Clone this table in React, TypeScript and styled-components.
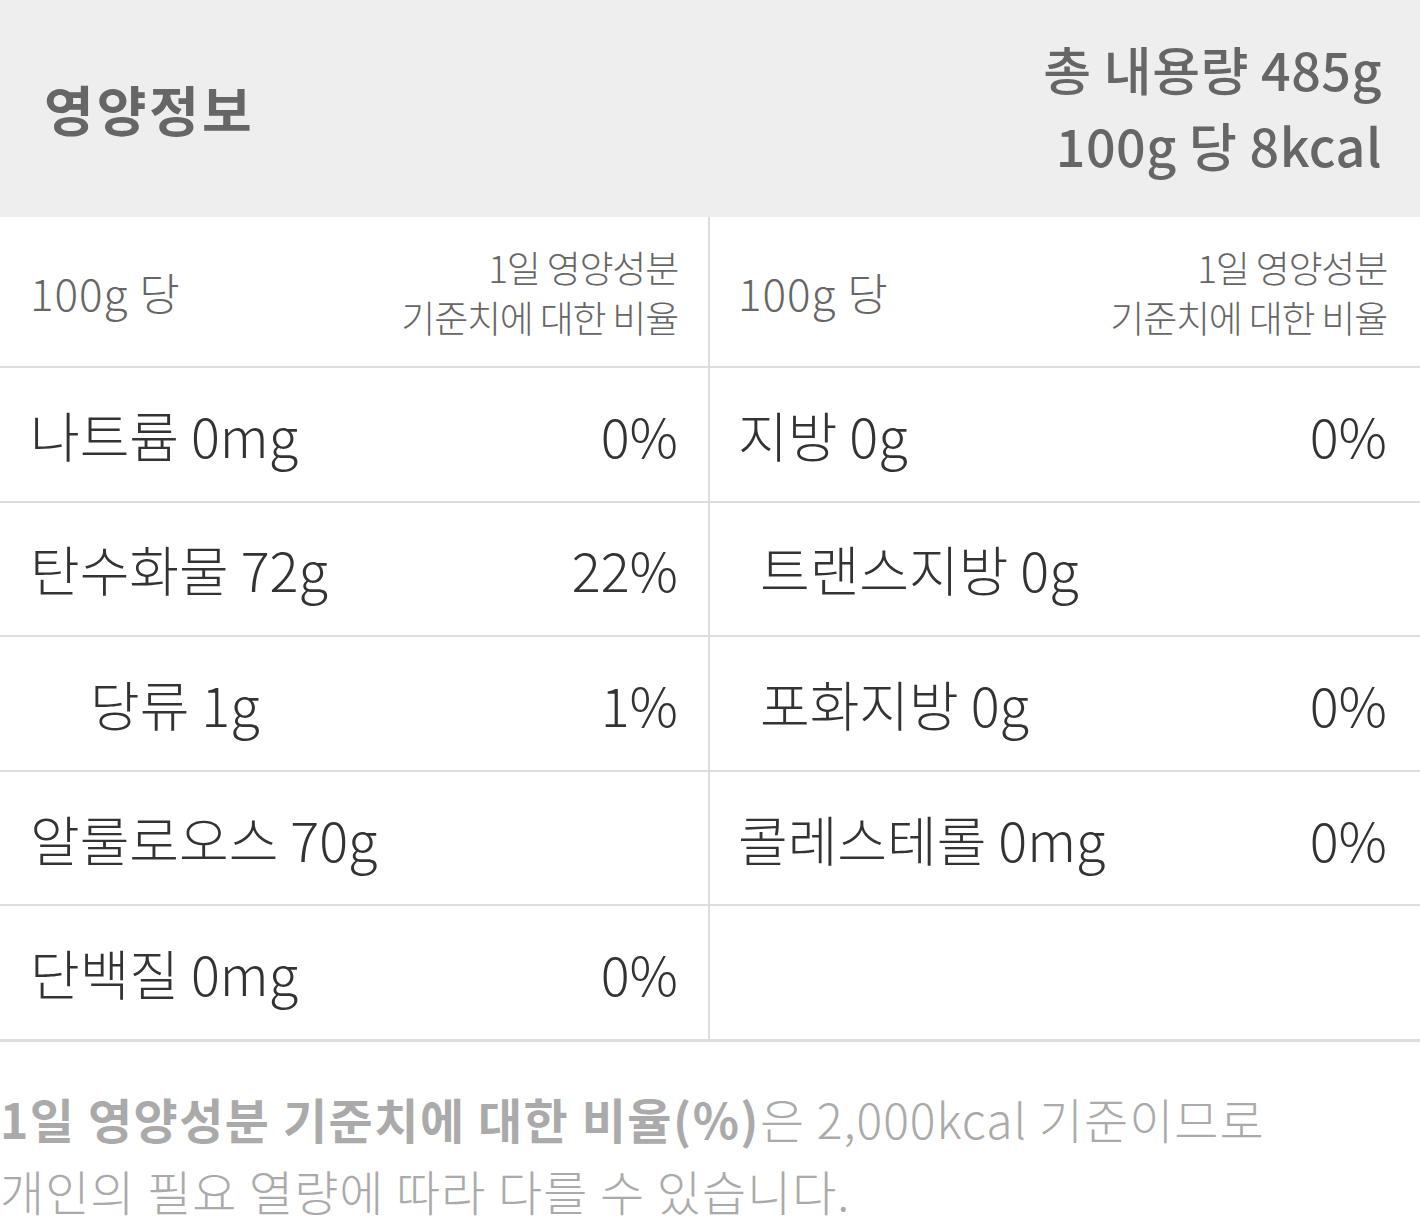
import styled, { createGlobalStyle } from 'styled-components';

const GlobalStyle = createGlobalStyle`
    html, body {
        margin: 0;
        padding: 0;
        background: #fff;
    }

    body {
        font-family: "Noto Sans CJK KR", "Noto Sans", sans-serif;
    }
`;

const Page = styled.div`
    width: 1420px;
    overflow: hidden;
`;

const Header = styled.header`
    height: 217px;
    box-sizing: border-box;
    background-color: #eeeeee;
    display: flex;
    justify-content: space-between;
    align-items: center;
    padding: 0 38px 0 44px;
    color: #666;
`;

const Title = styled.h1`
    margin: 0;
    font-size: 54px;
    font-weight: 700;
    letter-spacing: 3px;
`;

const Summary = styled.div`
    text-align: right;
    font-size: 52px;
    font-weight: 500;
    line-height: 76px;
    letter-spacing: 0.5px;
    margin-top: -4px;
`;

const Table = styled.div`
    display: grid;
    grid-template-columns: 710px 1fr;
`;

const Cell = styled.div<{ $head?: boolean; $left?: boolean; $indent?: number }>`
    box-sizing: border-box;
    height: ${(p) => (p.$head ? '151px' : '134.6px')};
    border-bottom: 2px solid #dddddd;
    border-right: ${(p) => (p.$left ? '2px solid #dddddd' : 'none')};
    display: flex;
    justify-content: space-between;
    align-items: center;
    padding: 0 ${(p) => (p.$left ? '30px' : '33px')} 0 ${(p) => (p.$left ? 30 : 28) + (p.$indent ?? 0)}px;
    color: #333;
    font-weight: 300;
    font-size: 54px;
`;

const HeadLabel = styled.span`
    color: #666;
    font-size: 44px;
    letter-spacing: 1px;
`;

const HeadNote = styled.span`
    color: #666;
    font-size: 37px;
    line-height: 50px;
    text-align: right;
    letter-spacing: -1.2px;
`;

const Amount = styled.span``;

const Percent = styled.span``;

const Footer = styled.footer`
    border-top: 1px solid #dddddd;
    padding-top: 40px;
    color: #aaa;
    font-size: 48px;
    font-weight: 300;
    line-height: 72px;
    letter-spacing: 1px;
    white-space: nowrap;
`;

const Strong = styled.strong`
    font-weight: 700;
    letter-spacing: 1.5px;
`;

type Nutrient = {
    name: string;
    amount: string;
    percent?: string;
    indent?: number;
};

const leftItems: Array<Nutrient | null> = [
    { name: '나트륨', amount: '0mg', percent: '0%' },
    { name: '탄수화물', amount: '72g', percent: '22%' },
    { name: '당류', amount: '1g', percent: '1%', indent: 60 },
    { name: '알룰로오스', amount: '70g' },
    { name: '단백질', amount: '0mg', percent: '0%' },
];

const rightItems: Array<Nutrient | null> = [
    { name: '지방', amount: '0g', percent: '0%' },
    { name: '트랜스지방', amount: '0g', indent: 22 },
    { name: '포화지방', amount: '0g', percent: '0%', indent: 22 },
    { name: '콜레스테롤', amount: '0mg', percent: '0%' },
    null,
];

function App() {
    const rows = leftItems.map((item, i) => [item, rightItems[i]]);

    return (
        <Page>
            <GlobalStyle />
            <Header>
                <Title>영양정보</Title>
                <Summary>
                    총 내용량 485g<br />
                    100g 당 8kcal
                </Summary>
            </Header>
            <Table>
                {[true, false].map((left) => (
                    <Cell key={`head-${left}`} $head $left={left}>
                        <HeadLabel>100g 당</HeadLabel>
                        <HeadNote>
                            1일 영양성분<br />
                            기준치에 대한 비율
                        </HeadNote>
                    </Cell>
                ))}
                {rows.map((pair, i) =>
                    pair.map((item, j) => (
                        <Cell key={`${i}-${j}`} $left={j === 0} $indent={item?.indent}>
                            {item && (
                                <>
                                    <Amount>{item.name} {item.amount}</Amount>
                                    {item.percent && <Percent>{item.percent}</Percent>}
                                </>
                            )}
                        </Cell>
                    ))
                )}
            </Table>
            <Footer>
                <Strong>1일 영양성분 기준치에 대한 비율(%)</Strong>은 2,000kcal 기준이므로<br />
                개인의 필요 열량에 따라 다를 수 있습니다.
            </Footer>
        </Page>
    );
}

export default App;
